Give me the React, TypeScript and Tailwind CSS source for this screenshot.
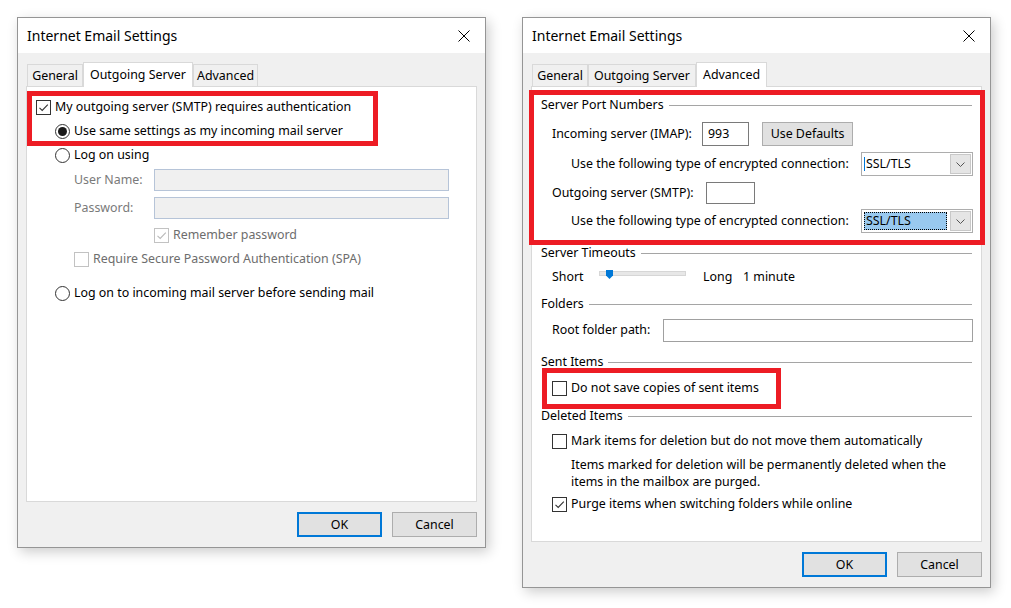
import React from 'react';

// Windows 10 style "Internet Email Settings" dialogs, side by side

const CheckBox = ({ checked = false, disabled = false }: { checked?: boolean; disabled?: boolean }) => (
  <span
    className={`flex h-[15px] w-[15px] shrink-0 items-center justify-center border bg-white ${
      disabled ? 'border-[#c2c2c2]' : 'border-[#333333]'
    }`}
  >
    {checked && (
      <svg viewBox="0 0 13 13" className="h-[13px] w-[13px]">
        <path
          d="M2.5 6.8 L5.2 9.4 L10.8 3.6"
          fill="none"
          stroke={disabled ? '#b9b9b9' : '#333333'}
          strokeWidth="1.1"
        />
      </svg>
    )}
  </span>
);

const Radio = ({ selected = false }: { selected?: boolean }) => (
  <span className="flex h-[15px] w-[15px] shrink-0 items-center justify-center rounded-full border border-[#333333] bg-white">
    {selected && <span className="h-[9px] w-[9px] rounded-full bg-[#1a1a1a]" />}
  </span>
);

const Button = ({ label, primary = false }: { label: string; primary?: boolean }) => (
  <div
    className={`flex h-[25px] w-[85px] items-center justify-center bg-[#e1e1e1] pt-[2px] ${
      primary ? 'border-2 border-[#0078d7]' : 'border border-[#adadad]'
    }`}
  >
    {label}
  </div>
);

const Close = () => (
  <svg width="12" height="12" viewBox="0 0 12 12">
    <path d="M0.5 0.5 L11.5 11.5 M11.5 0.5 L0.5 11.5" stroke="#000" strokeWidth="1" />
  </svg>
);

type Tab = { label: string; width: string };

const Dialog = ({
  tabs,
  active,
  panel,
}: {
  tabs: Tab[];
  active: number;
  panel: React.ReactNode;
}) => (
  <div className="w-[469px] shrink-0 border border-[#959595] bg-[#f0f0f0] shadow-[3px_4px_12px_rgba(0,0,0,0.2)]">
    <div className="flex h-[35px] items-center justify-between bg-white pl-[9px] pr-[15px]">
      <span className="text-[14px]">Internet Email Settings</span>
      <Close />
    </div>
    <div className="px-[8px] pt-[9px]">
      <div className="flex h-[24px] items-end pl-[1px]">
        {tabs.map((t, i) =>
          i === active ? (
            <div
              key={t.label}
              className={`relative z-10 -mb-px flex h-[25px] items-center justify-center border border-b-0 border-[#d9d9d9] bg-white ${t.width}`}
            >
              {t.label}
            </div>
          ) : (
            <div
              key={t.label}
              className={`flex h-[22px] items-center justify-center border border-b-0 border-[#d9d9d9] bg-[#f0f0f0] pt-[1px] ${t.width}`}
            >
              {t.label}
            </div>
          )
        )}
      </div>
      {panel}
      <div className="flex justify-end gap-[10px] py-[10px]">
        <Button label="OK" primary />
        <Button label="Cancel" />
      </div>
    </div>
  </div>
);

const Group = ({ label }: { label: string }) => (
  <div className="flex h-[16px] items-center px-[9px]">
    <span className="pt-[1px]">{label}</span>
    <div className="ml-[5px] h-px flex-1 bg-[#a5a5a5]" />
  </div>
);

const Select = ({ focused = false }: { focused?: boolean }) => (
  <div className="ml-auto flex h-[24px] w-[112px] border border-[#adadad] bg-white">
    <div className="flex flex-1 items-center p-[2px]">
      {focused ? (
        <span className="flex h-full flex-1 items-center border border-dotted border-black bg-[#99c9ef] pl-[1px]">
          SSL/TLS
        </span>
      ) : (
        <span className="flex h-full flex-1 items-center">
          <span className="mr-[1px] h-[14px] w-px bg-[#0078d7]" />
          SSL/TLS
        </span>
      )}
    </div>
    <div className="m-[1px] flex w-[21px] items-center justify-center border border-[#c8c8c8] bg-[#e5e5e5]">
      <svg width="9" height="5" viewBox="0 0 9 5">
        <path d="M0.5 0.5 L4.5 4.5 L8.5 0.5" fill="none" stroke="#555" strokeWidth="1" />
      </svg>
    </div>
  </div>
);

const RedBox = ({ className }: { className: string }) => (
  <div className={`pointer-events-none absolute border-[5px] border-[#ed1c24] ${className}`} />
);

const OutgoingPanel = () => (
  <div className="relative h-[416px] border border-[#d9d9d9] bg-white pt-[8px]">
    <div className="flex h-[24px] items-center gap-[4px] pl-[9px]">
      <CheckBox checked />
      <span>My outgoing server (SMTP) requires authentication</span>
    </div>
    <div className="flex h-[24px] items-center gap-[4px] pl-[28px]">
      <Radio selected />
      <span>Use same settings as my incoming mail server</span>
    </div>
    <div className="flex h-[24px] items-center gap-[4px] pl-[28px]">
      <Radio />
      <span>Log on using</span>
    </div>
    <div className="mt-[2px] flex h-[22px] items-center pl-[47px] pr-[27px]">
      <span className="w-[80px] text-[#7a7a7a]">User Name:</span>
      <div className="h-full flex-1 border border-[#b6c4d8] bg-[#f0f0f0]" />
    </div>
    <div className="mt-[6px] flex h-[22px] items-center pl-[47px] pr-[27px]">
      <span className="w-[80px] text-[#7a7a7a]">Password:</span>
      <div className="h-full flex-1 border border-[#b6c4d8] bg-[#f0f0f0]" />
    </div>
    <div className="mt-[4px] flex h-[24px] items-center gap-[4px] pl-[127px]">
      <CheckBox checked disabled />
      <span className="text-[#6d6d6d]">Remember password</span>
    </div>
    <div className="flex h-[24px] items-center gap-[4px] pl-[47px]">
      <CheckBox disabled />
      <span className="text-[#6d6d6d]">Require Secure Password Authentication (SPA)</span>
    </div>
    <div className="mt-[10px] flex h-[24px] items-center gap-[4px] pl-[28px]">
      <Radio />
      <span>Log on to incoming mail server before sending mail</span>
    </div>
    <RedBox className="left-0 top-[4px] h-[55px] w-[351px]" />
  </div>
);

const AdvancedPanel = () => (
  <div className="relative h-[456px] border border-[#d9d9d9] bg-white pt-[10px]">
    <Group label="Server Port Numbers" />
    <div className="mt-[9px] flex h-[24px] items-center pl-[20px]">
      <span className="w-[150px]">Incoming server (IMAP):</span>
      <div className="flex h-full w-[47px] items-center border border-[#7a7a7a] pl-[5px]">993</div>
      <div className="ml-[13px] flex h-full w-[91px] items-center justify-center border border-[#adadad] bg-[#e1e1e1]">
        Use Defaults
      </div>
    </div>
    <div className="mt-[6px] flex h-[24px] items-center pl-[39px] pr-[8px]">
      <span>Use the following type of encrypted connection:</span>
      <Select />
    </div>
    <div className="mt-[6px] flex h-[22px] items-center pl-[20px]">
      <span className="w-[154px]">Outgoing server (SMTP):</span>
      <div className="h-full w-[49px] border border-[#7a7a7a]" />
    </div>
    <div className="mt-[5px] flex h-[24px] items-center pl-[39px] pr-[8px]">
      <span>Use the following type of encrypted connection:</span>
      <Select focused />
    </div>

    <div className="mt-[12px]">
      <Group label="Server Timeouts" />
    </div>
    <div className="mt-[4px] flex h-[24px] items-center pl-[20px]">
      <span className="w-[47px]">Short</span>
      <div className="relative mb-[5px] h-[9px] w-[87px]">
        <div className="absolute left-0 right-0 top-[1px] h-[5px] border border-[#d6d6d6] bg-[#e7e7e7]" />
        <svg className="absolute left-[7px] top-0" width="7" height="9" viewBox="0 0 7 9">
          <path d="M0 0 H7 V5.5 L3.5 9 L0 5.5 Z" fill="#0078d7" />
        </svg>
      </div>
      <span className="ml-[17px] w-[40px]">Long</span>
      <span>1 minute</span>
    </div>

    <div className="mt-[7px]">
      <Group label="Folders" />
    </div>
    <div className="mt-[6px] flex h-[24px] items-center pl-[20px] pr-[8px]">
      <span className="w-[111px]">Root folder path:</span>
      <div className="h-[23px] flex-1 border border-[#a0a0a0]" />
    </div>

    <div className="mt-[12px]">
      <Group label="Sent Items" />
    </div>
    <div className="mt-[6px] flex h-[24px] items-center gap-[4px] pl-[20px]">
      <CheckBox />
      <span>Do not save copies of sent items</span>
    </div>

    <div className="mt-[8px]">
      <Group label="Deleted Items" />
    </div>
    <div className="mt-[5px] flex h-[24px] items-center gap-[4px] pl-[20px]">
      <CheckBox />
      <span>Mark items for deletion but do not move them automatically</span>
    </div>
    <p className="mt-[3px] pl-[39px] pr-[20px] leading-[17px]">
      Items marked for deletion will be permanently deleted when the
      <br />
      items in the mailbox are purged.
    </p>
    <div className="mt-[2px] flex h-[24px] items-center gap-[4px] pl-[20px]">
      <CheckBox checked />
      <span>Purge items when switching folders while online</span>
    </div>

    <RedBox className="-left-[3px] top-[3px] h-[155px] w-[456px]" />
    <RedBox className="left-[10px] top-[281px] h-[41px] w-[239px]" />
  </div>
);

export default function App() {
  return (
    <div className="flex min-h-screen items-start gap-[36px] bg-white pl-[17px] pt-[17px] font-['Noto_Sans',sans-serif] text-[12.4px] text-black">
      <Dialog
        tabs={[
          { label: 'General', width: 'w-[56px]' },
          { label: 'Outgoing Server', width: 'w-[110px]' },
          { label: 'Advanced', width: 'w-[65px]' },
        ]}
        active={1}
        panel={<OutgoingPanel />}
      />
      <Dialog
        tabs={[
          { label: 'General', width: 'w-[56px]' },
          { label: 'Outgoing Server', width: 'w-[108px]' },
          { label: 'Advanced', width: 'w-[71px]' },
        ]}
        active={2}
        panel={<AdvancedPanel />}
      />
    </div>
  );
}
